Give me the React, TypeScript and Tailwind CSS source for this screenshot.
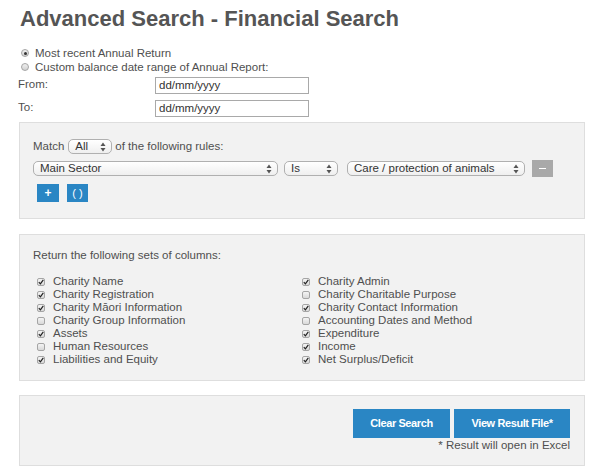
import React from "react";

function Arrows() {
  return (
    <svg width="6" height="10" viewBox="0 0 6 10" className="shrink-0">
      <path d="M3 0.5 L5.5 4 L0.5 4 Z" fill="#555" />
      <path d="M3 9.5 L5.5 6 L0.5 6 Z" fill="#555" />
    </svg>
  );
}

function Select({ label, w }: { label: string; w: string }) {
  return (
    <div
      className={`${w} h-[15px] shrink-0 flex items-center justify-between pl-[6px] pr-[5px] rounded-[5px] border border-[#b0b0b0] bg-gradient-to-b from-[#ffffff] to-[#efefef] text-[#333] leading-[13px]`}
    >
      <span>{label}</span>
      <Arrows />
    </div>
  );
}

function Check({ on }: { on: boolean }) {
  return (
    <span className="w-[8px] h-[8px] mr-[8px] shrink-0 rounded-[2px] border border-[#a5a5a5] bg-gradient-to-b from-[#f4f4f4] to-[#d9d9d9] flex items-center justify-center">
      {on && (
        <svg width="6" height="6" viewBox="0 0 6 6">
          <path d="M0.8 3.2 L2.4 4.9 L5.3 0.8" stroke="#222" strokeWidth="1.2" fill="none" />
        </svg>
      )}
    </span>
  );
}

function Radio({ on }: { on: boolean }) {
  return (
    <span className="w-[8px] h-[8px] mr-[6px] shrink-0 rounded-full border border-[#a5a5a5] bg-gradient-to-b from-[#f0f0f0] to-[#d2d2d2] flex items-center justify-center">
      {on && <span className="w-[3px] h-[3px] rounded-full bg-[#333]" />}
    </span>
  );
}

const left: [string, boolean][] = [
  ["Charity Name", true],
  ["Charity Registration", true],
  ["Charity Māori Information", true],
  ["Charity Group Information", false],
  ["Assets", true],
  ["Human Resources", false],
  ["Liabilities and Equity", true],
];
const right: [string, boolean][] = [
  ["Charity Admin", true],
  ["Charity Charitable Purpose", false],
  ["Charity Contact Information", true],
  ["Accounting Dates and Method", false],
  ["Expenditure", true],
  ["Income", true],
  ["Net Surplus/Deficit", true],
];

export default function App() {
  const rows: React.ReactNode[] = [];
  for (let i = 0; i < 7; i++) {
    rows.push(
      <div key={"l" + i} className="flex items-center h-[13px]">
        <Check on={left[i][1]} />
        <span>{left[i][0]}</span>
      </div>
    );
    rows.push(
      <div key={"r" + i} className="flex items-center h-[13px]">
        <Check on={right[i][1]} />
        <span>{right[i][0]}</span>
      </div>
    );
  }

  return (
    <div className="w-[600px] h-[475px] bg-white text-[#4f4f4f] text-[11.5px] font-['Liberation_Sans','Helvetica',Arial,sans-serif] overflow-hidden">
      <h1 className="pl-[20px] pt-[5px] h-[33px] text-[22px] leading-[28px] font-bold text-[#555]">
        Advanced Search - Financial Search
      </h1>

      <div className="mt-[13px] pl-[21px] leading-[14px]">
        <div className="flex items-center h-[14px]">
          <Radio on={true} />
          <span>Most recent Annual Return</span>
        </div>
        <div className="flex items-center h-[14px]">
          <Radio on={false} />
          <span>Custom balance date range of Annual Report:</span>
        </div>
      </div>

      <div className="mt-[2px] pl-[18px] flex items-center h-[18px]">
        <span className="w-[137px] shrink-0">From:</span>
        <div className="w-[154px] h-[17px] border border-[#a9a9a9] bg-white pl-[3px] text-[#333] leading-[15px]">
          dd/mm/yyyy
        </div>
      </div>
      <div className="mt-[5px] pl-[18px] flex items-center h-[18px]">
        <span className="w-[137px] shrink-0">To:</span>
        <div className="w-[154px] h-[17px] border border-[#a9a9a9] bg-white pl-[3px] text-[#333] leading-[15px]">
          dd/mm/yyyy
        </div>
      </div>

      <div className="mt-[5px] ml-[19px] w-[566px] border border-[#dedede] bg-[#f2f2f2] pt-[16px] pb-[16px] pl-[13px]">
        <div className="flex items-center h-[15px]">
          <span>Match</span>
          <div className="ml-[4px]">
            <Select label="All" w="w-[44px]" />
          </div>
          <span className="ml-[3px]">of the following rules:</span>
        </div>
        <div className="mt-[6px] flex items-center h-[17px]">
          <Select label="Main Sector" w="w-[245px]" />
          <div className="ml-[6px]">
            <Select label="Is" w="w-[54px]" />
          </div>
          <div className="ml-[9px]">
            <Select label="Care / protection of animals" w="w-[178px]" />
          </div>
          <div className="ml-[7px] w-[21px] h-[17px] bg-[#a9a9a9] flex items-center justify-center">
            <span className="w-[7px] h-[1.5px] bg-white" />
          </div>
        </div>
        <div className="mt-[7px] pl-[4px] flex gap-[8px]">
          <div className="w-[22px] h-[18px] bg-[#2a86c4] text-white font-bold text-[12px] flex items-center justify-center leading-none">
            +
          </div>
          <div className="w-[21px] h-[18px] bg-[#2a86c4] text-white text-[11px] flex items-center justify-center leading-none">
            ( )
          </div>
        </div>
      </div>

      <div className="mt-[15px] ml-[19px] w-[566px] border border-[#dedede] bg-[#f2f2f2] pt-[13px] pb-[14px] pl-[13px]">
        <div className="leading-[15px]">Return the following sets of columns:</div>
        <div className="mt-[12px] pl-[4px] grid grid-cols-[265px_1fr] leading-[13px]">
          {rows}
        </div>
      </div>

      <div className="mt-[14px] ml-[19px] w-[566px] border border-[#dedede] bg-[#f2f2f2] pt-[13px] pb-[12px] pr-[14px] flex flex-col items-end">
        <div className="flex gap-[4px]">
          <div className="w-[97px] h-[29px] bg-[#2a86c4] text-white text-[11px] font-bold tracking-[-0.4px] flex items-center justify-center">
            Clear Search
          </div>
          <div className="w-[116px] h-[29px] bg-[#2a86c4] text-white text-[11px] font-bold tracking-[-0.4px] flex items-center justify-center">
            View Result File*
          </div>
        </div>
        <div className="leading-[15px]">* Result will open in Excel</div>
      </div>
    </div>
  );
}
